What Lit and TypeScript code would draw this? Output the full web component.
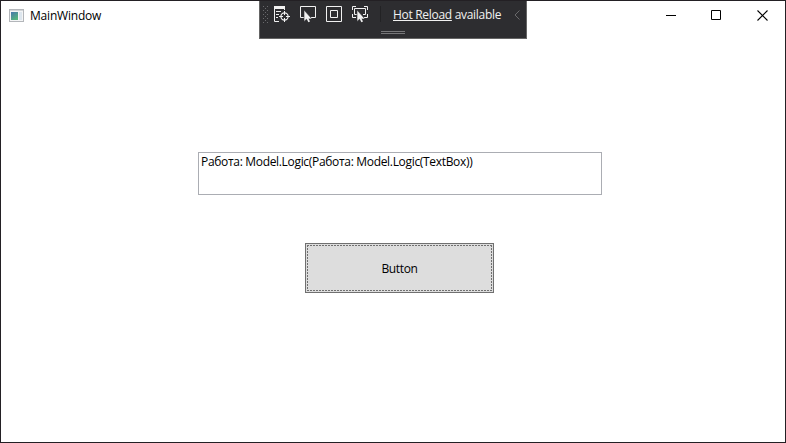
import { LitElement, html, css, svg } from "lit";
import { customElement } from "lit/decorators.js";

const cursor = svg`<path d="M0 0V11.5L2.8 9H8Z" fill="#f1f1f1" stroke="#2d2d30" stroke-width="0.6"/><path d="M3 7.5L5.2 11.8" stroke="#f1f1f1" stroke-width="1.8"/>`;

@customElement("debug-toolbar")
class DebugToolbar extends LitElement {
  static styles = css`
    :host { display: block; box-sizing: border-box; width: 268px; height: 39px; background: #2d2d30; border: 1px solid #656565; color: #f1f1f1; }
    .row { display: flex; align-items: flex-start; height: 29px; }
    svg { display: block; flex: none; }
    .handle { margin: 5px 0 0 3px; }
    .tool { margin: 5px 0 0 8px; }
    .first { margin-left: 5px; }
    .sep { width: 1px; height: 16px; background: #222224; margin: 5px 0 0 10px; }
    .label { font: 12px/16px "Open Sans", "Noto Sans", sans-serif; letter-spacing: -0.3px; margin: 6px 0 0 12px; width: 113px; white-space: nowrap; }
    .link { text-decoration: underline; text-underline-offset: 1px; text-decoration-thickness: 1px; }
    .chevron { margin: 9px 0 0 8px; }
    .grip { width: 24px; height: 1px; border: solid #777779; border-width: 1px 0; margin: 1px auto 0; }
  `;
  render() {
    const dots = [];
    for (let y = 0; y < 9; y++)
      for (let x = (y % 2) * 2; x < 6; x += 4) dots.push(svg`<rect x=${x} y=${y * 2} width="1" height="1"/>`);
    return html`
      <div class="row">
        <svg class="handle" width="6" height="18" fill="#6a6a6d">${dots}</svg>
        <svg class="tool first" width="18" height="18" fill="none" stroke="#f1f1f1">
          <path d="M0 0H11V3H0Z" fill="#f1f1f1" stroke="none"/>
          <path d="M0.5 3V15.5H5M10.5 3V4M2 5.5H7M2 8.5H5M2 11.5H4"/>
          <circle cx="10.5" cy="10.5" r="3.6" stroke-width="1.2"/>
          <path d="M10.5 5V9M10.5 12V16M5 10.5H9M12 10.5H16"/>
        </svg>
        <svg class="tool" width="18" height="18">
          <path d="M4 11.5H0.5V0.5H15.5V11.5H11" fill="none" stroke="#f1f1f1"/>
          <g transform="translate(4 4)">${cursor}</g>
        </svg>
        <svg class="tool" width="18" height="18" fill="none" stroke="#f1f1f1">
          <path d="M0.5 0.5H15.5V15.5H0.5ZM4.5 4.5H11.5V11.5H4.5Z"/>
        </svg>
        <svg class="tool" width="18" height="18">
          <path d="M0.5 4V0.5H4M12 0.5H15.5V4M15.5 8V11.5H12M4 11.5H0.5V8M5 8.5H2.5V2.5H13.5V8.5H11" fill="none" stroke="#f1f1f1"/>
          <g transform="translate(5 4)">${cursor}</g>
        </svg>
        <div class="sep"></div>
        <div class="label"><span class="link">Hot Reload</span> available</div>
        <svg class="chevron" width="7" height="10" fill="none" stroke="#69696b"><path d="M5.5 0.5L1 5L5.5 9.5"/></svg>
      </div>
      <div class="grip"></div>
    `;
  }
}

@customElement("app-root")
class AppRoot extends LitElement {
  static styles = css`
    :host { display: block; box-sizing: border-box; position: relative; width: 786px; height: 443px; background: #fff; border: 1px solid #232024; color: #000; font: 12px/16px "Open Sans", "Noto Sans", sans-serif; letter-spacing: -0.2px; overflow: hidden; }
    debug-toolbar { position: absolute; left: 258px; top: -1px; }
    .titlebar { display: flex; align-items: center; height: 29px; }
    .app { display: block; margin: 0 5px 0 8px; }
    .title { flex: 1; }
    .caption { display: flex; align-items: flex-start; box-sizing: border-box; width: 46px; height: 29px; padding: 9px 0 0 18px; }
    .caption.min { padding-left: 19px; }
    .caption svg { display: block; }
    .content { display: flex; flex-direction: column; padding-top: 122px; }
    .textbox { box-sizing: border-box; width: 404px; height: 43px; border: 1px solid #abadb3; margin-left: 197px; padding: 1px 2px; white-space: nowrap; letter-spacing: -0.32px; }
    .button { display: flex; align-items: stretch; box-sizing: border-box; width: 189px; height: 50px; margin: 48px 0 0 304px; padding: 1px; background: #ddd; border: 1px solid #707070; color: inherit; font: inherit; letter-spacing: -0.35px; position: relative; }
    .face { flex: 1; display: flex; align-items: center; justify-content: center; padding-top: 2px; }
    .focus { position: absolute; left: 1px; top: 1px; }
  `;
  render() {
    return html`
      <div class="titlebar">
        <svg class="app" width="16" height="14">
          <defs><linearGradient id="g" x2="0.6" y2="1"><stop stop-color="#4676ad"/><stop offset="1" stop-color="#55b57c"/></linearGradient></defs>
          <rect x="0.5" y="0.5" width="14" height="12" fill="#f4f5f6" stroke="#b3b6ba"/>
          <rect x="1" y="1" width="13" height="1" fill="#d2d5d8"/>
          <rect x="2" y="3" width="7" height="8" fill="url(#g)"/>
          <rect x="10" y="3" width="3" height="8" fill="#dde6ee"/>
        </svg>
        <div class="title">MainWindow</div>
        <div class="caption min"><svg width="10" height="10"><path d="M0 5.5H10" stroke="#000"/></svg></div>
        <div class="caption"><svg width="10" height="10"><path d="M0.5 0.5H9.5V9.5H0.5Z" fill="none" stroke="#000"/></svg></div>
        <div class="caption"><svg width="11" height="11"><path d="M0.5 0.5L10.5 10.5M10.5 0.5L0.5 10.5" stroke="#000" stroke-width="1.1"/></svg></div>
      </div>
      <div class="content">
        <div class="textbox">Работа: Model.Logic(Работа: Model.Logic(TextBox))</div>
        <button class="button">
          <span class="face">Button</span>
          <svg class="focus" width="185" height="46"><path d="M0 0.5H185M0 45.5H185M0.5 0V46M184.5 0V46" fill="none" stroke="#707070" stroke-dasharray="2 1"/></svg>
        </button>
      </div>
      <debug-toolbar></debug-toolbar>
    `;
  }
}
